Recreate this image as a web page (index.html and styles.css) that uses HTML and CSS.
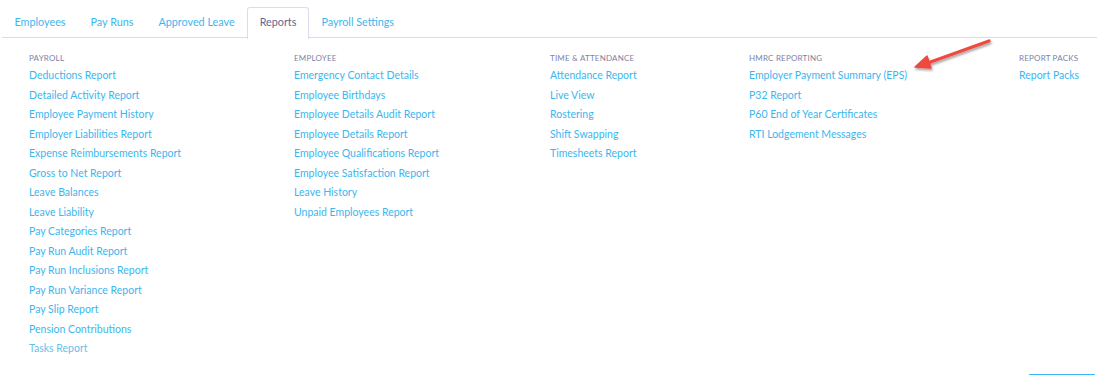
FILE: index.html
```html
<!DOCTYPE html>
<html lang="en">

<head>
    <meta charset="UTF-8">
    <title>Reports</title>
    <link rel="stylesheet" href="styles.css">
</head>

<body>
    <ul class="tabs">
        <li><a href="#">Employees</a></li>
        <li><a href="#">Pay Runs</a></li>
        <li><a href="#">Approved Leave</a></li>
        <li class="active"><a href="#">Reports</a></li>
        <li><a href="#">Payroll Settings</a></li>
    </ul>

    <div class="report-menu">
        <div class="group">
            <h5>Payroll</h5>
            <a href="#">Deductions Report</a>
            <a href="#">Detailed Activity Report</a>
            <a href="#">Employee Payment History</a>
            <a href="#">Employer Liabilities Report</a>
            <a href="#">Expense Reimbursements Report</a>
            <a href="#">Gross to Net Report</a>
            <a href="#">Leave Balances</a>
            <a href="#">Leave Liability</a>
            <a href="#">Pay Categories Report</a>
            <a href="#">Pay Run Audit Report</a>
            <a href="#">Pay Run Inclusions Report</a>
            <a href="#">Pay Run Variance Report</a>
            <a href="#">Pay Slip Report</a>
            <a href="#">Pension Contributions</a>
            <a href="#" class="muted">Tasks Report</a>
        </div>
        <div class="group">
            <h5>Employee</h5>
            <a href="#">Emergency Contact Details</a>
            <a href="#">Employee Birthdays</a>
            <a href="#">Employee Details Audit Report</a>
            <a href="#">Employee Details Report</a>
            <a href="#">Employee Qualifications Report</a>
            <a href="#">Employee Satisfaction Report</a>
            <a href="#">Leave History</a>
            <a href="#">Unpaid Employees Report</a>
        </div>
        <div class="group">
            <h5>Time &amp; Attendance</h5>
            <a href="#">Attendance Report</a>
            <a href="#">Live View</a>
            <a href="#">Rostering</a>
            <a href="#">Shift Swapping</a>
            <a href="#">Timesheets Report</a>
        </div>
        <div class="group hmrc">
            <h5>HMRC Reporting</h5>
            <a href="#">Employer Payment Summary (EPS)</a>
            <a href="#">P32 Report</a>
            <a href="#">P60 End of Year Certificates</a>
            <a href="#">RTI Lodgement Messages</a>
            <svg class="arrow" width="90" height="40" viewBox="0 0 90 40">
                <defs>
                    <filter id="shadow" x="-20%" y="-40%" width="140%" height="180%">
                        <feDropShadow dx="1" dy="2" stdDeviation="1.2" flood-color="#000" flood-opacity="0.35"/>
                    </filter>
                </defs>
                <g filter="url(#shadow)">
                    <line x1="82" y1="6" x2="18" y2="29" stroke="#ef4a3f" stroke-width="3.4" stroke-linecap="round"/>
                    <path d="M8 32 L20 21 L24 33 Z" fill="#ef4a3f" stroke="#ef4a3f" stroke-width="1.5" stroke-linejoin="round"/>
                </g>
            </svg>
        </div>
        <div class="group">
            <h5>Report Packs</h5>
            <a href="#">Report Packs</a>
        </div>
    </div>

    <div class="footer">
        <button class="save-btn"></button>
    </div>
</body>

</html>
```

FILE: styles.css
```css
body {
    margin: 0;
    background-color: #fff;
    font-family: Lato, "Open Sans", sans-serif;
}

.tabs {
    display: flex;
    list-style: none;
    margin: 7px 2px 0;
    padding: 0;
    border-bottom: 1px solid #d9dcee;
    height: 30px;
}

.tabs li {
    margin-bottom: -1px;
    border: 1px solid transparent;
    border-bottom: none;
    border-radius: 3px 3px 0 0;
}

.tabs a {
    display: block;
    padding: 0 11.5px;
    line-height: 28px;
    font-size: 10.8px;
    color: #3cb6ee;
    text-decoration: none;
}

.tabs li.active {
    border-color: #d9dcee;
    background-color: #fff;
    height: 31px;
}

.tabs li.active a {
    color: #5d6796;
}

.report-menu {
    display: grid;
    grid-template-columns: 265px 256px 199px 270px auto;
    padding: 14px 0 0 29px;
}

.group {
    display: flex;
    flex-direction: column;
    align-items: flex-start;
}

.group h5 {
    margin: 0 0 2px;
    font-size: 8px;
    font-weight: 400;
    letter-spacing: 0.2px;
    text-transform: uppercase;
    color: #7d82a8;
    line-height: 12px;
}

.group a {
    font-size: 10.5px;
    line-height: 19.5px;
    color: #3cb6ee;
    text-decoration: none;
}

.group a.muted {
    color: #66c1ea;
}

.hmrc {
    position: relative;
}

.arrow {
    position: absolute;
    left: 158px;
    top: -17px;
}

.footer {
    display: flex;
    justify-content: flex-end;
    padding: 15px 4px 0 0;
}

.save-btn {
    width: 66px;
    height: 3px;
    padding: 0;
    border: none;
    border-top: 3px solid #3cb6ee;
    background: #fff;
}
```
